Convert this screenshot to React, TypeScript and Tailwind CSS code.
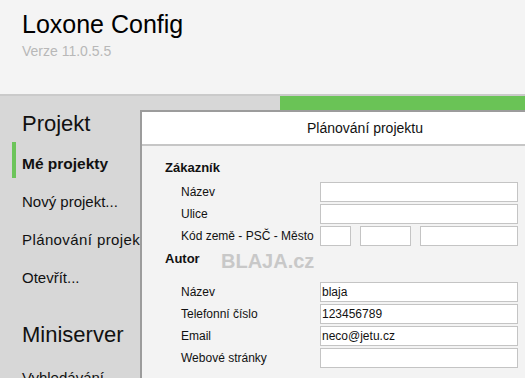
import React from "react";

function Field({ label, value }: { label: string; value?: string }) {
  return (
    <div className="flex h-[20px] items-stretch">
      <div className="w-[178px] shrink-0 pl-[39px] text-[12px] leading-[20px] whitespace-nowrap">{label}</div>
      <div className="w-[198px] shrink-0 h-[20px] border border-[#c4c4c4] bg-white pl-[1px] text-[12px] leading-[18px]">
        {value}
      </div>
    </div>
  );
}

export default function App() {
  return (
    <div className="relative w-[525px] h-[378px] overflow-hidden bg-[#d7d7d7] text-[#111] [font-family:'Liberation_Sans',Arial,sans-serif]">
      <header className="h-[96px] bg-[#f4f4f4] border-b-2 border-[#cacaca] pl-[22px] pt-[9px]">
        <div className="text-[25px] leading-[30px] text-black">Loxone Config</div>
        <div className="mt-[3px] text-[14px] leading-[18px] text-[#b8b8b8]">Verze 11.0.5.5</div>
      </header>

      <div className="relative">
        <nav className="pt-[15px]">
          <div className="pl-[22px] text-[22px] leading-[26px]">Projekt</div>
          <div className="relative mt-[8px] pl-[22px] text-[15.5px] font-bold leading-[38px]">
            <span className="absolute left-[12px] top-[-3px] h-[36px] w-[4px] bg-[#6cc45a]" />
            Mé projekty
          </div>
          <div className="pl-[22px] text-[15px] leading-[38px]">Nový projekt...</div>
          <div className="pl-[22px] text-[15px] leading-[38px] tracking-[0.4px] whitespace-nowrap">Plánování projektu</div>
          <div className="pl-[22px] text-[15px] leading-[38px]">Otevřít...</div>
          <div className="mt-[25px] pl-[22px] text-[22px] leading-[26px]">Miniserver</div>
          <div className="mt-[11px] pl-[22px] text-[15px] leading-[38px]">Vyhledávání</div>
        </nav>

        <div className="absolute left-[280px] top-0 right-0 h-[14px] bg-[#6ac356]" />

        <div className="absolute left-[140px] top-[14px] w-[448px] h-[300px] border-l-2 border-t-2 border-[#9c9c9c] bg-[#f3f3f3]">
          <div className="h-[34px] bg-white border-b-2 border-[#c6c6c6] text-center text-[14px] leading-[32px]">
            Plánování projektu
          </div>
          <div className="pt-[14px]">
            <div className="pl-[23px] text-[13px] font-bold leading-[16px]">Zákazník</div>
            <div className="mt-[6px] flex flex-col gap-[2px]">
              <Field label="Název" />
              <Field label="Ulice" />
              <div className="flex h-[20px] items-stretch">
                <div className="w-[178px] shrink-0 pl-[39px] text-[12px] leading-[20px] whitespace-nowrap">Kód země - PSČ - Město</div>
                <div className="w-[31px] shrink-0 h-[20px] border border-[#c4c4c4] bg-white" />
                <div className="ml-[9px] w-[51px] shrink-0 h-[20px] border border-[#c4c4c4] bg-white" />
                <div className="ml-[9px] w-[98px] shrink-0 h-[20px] border border-[#c4c4c4] bg-white" />
              </div>
            </div>
            <div className="mt-[5px] pl-[23px] text-[13px] font-bold leading-[16px]">Autor</div>
            <div className="mt-[15px] flex flex-col gap-[2px]">
              <Field label="Název" value="blaja" />
              <Field label="Telefonní číslo" value="123456789" />
              <Field label="Email" value="neco@jetu.cz" />
              <Field label="Webové stránky" />
            </div>
          </div>
          <div className="absolute left-[79px] top-[137px] text-[20px] font-bold leading-[24px] text-[#c8c8c8]">
            BLAJA.cz
          </div>
        </div>
      </div>
    </div>
  );
}
